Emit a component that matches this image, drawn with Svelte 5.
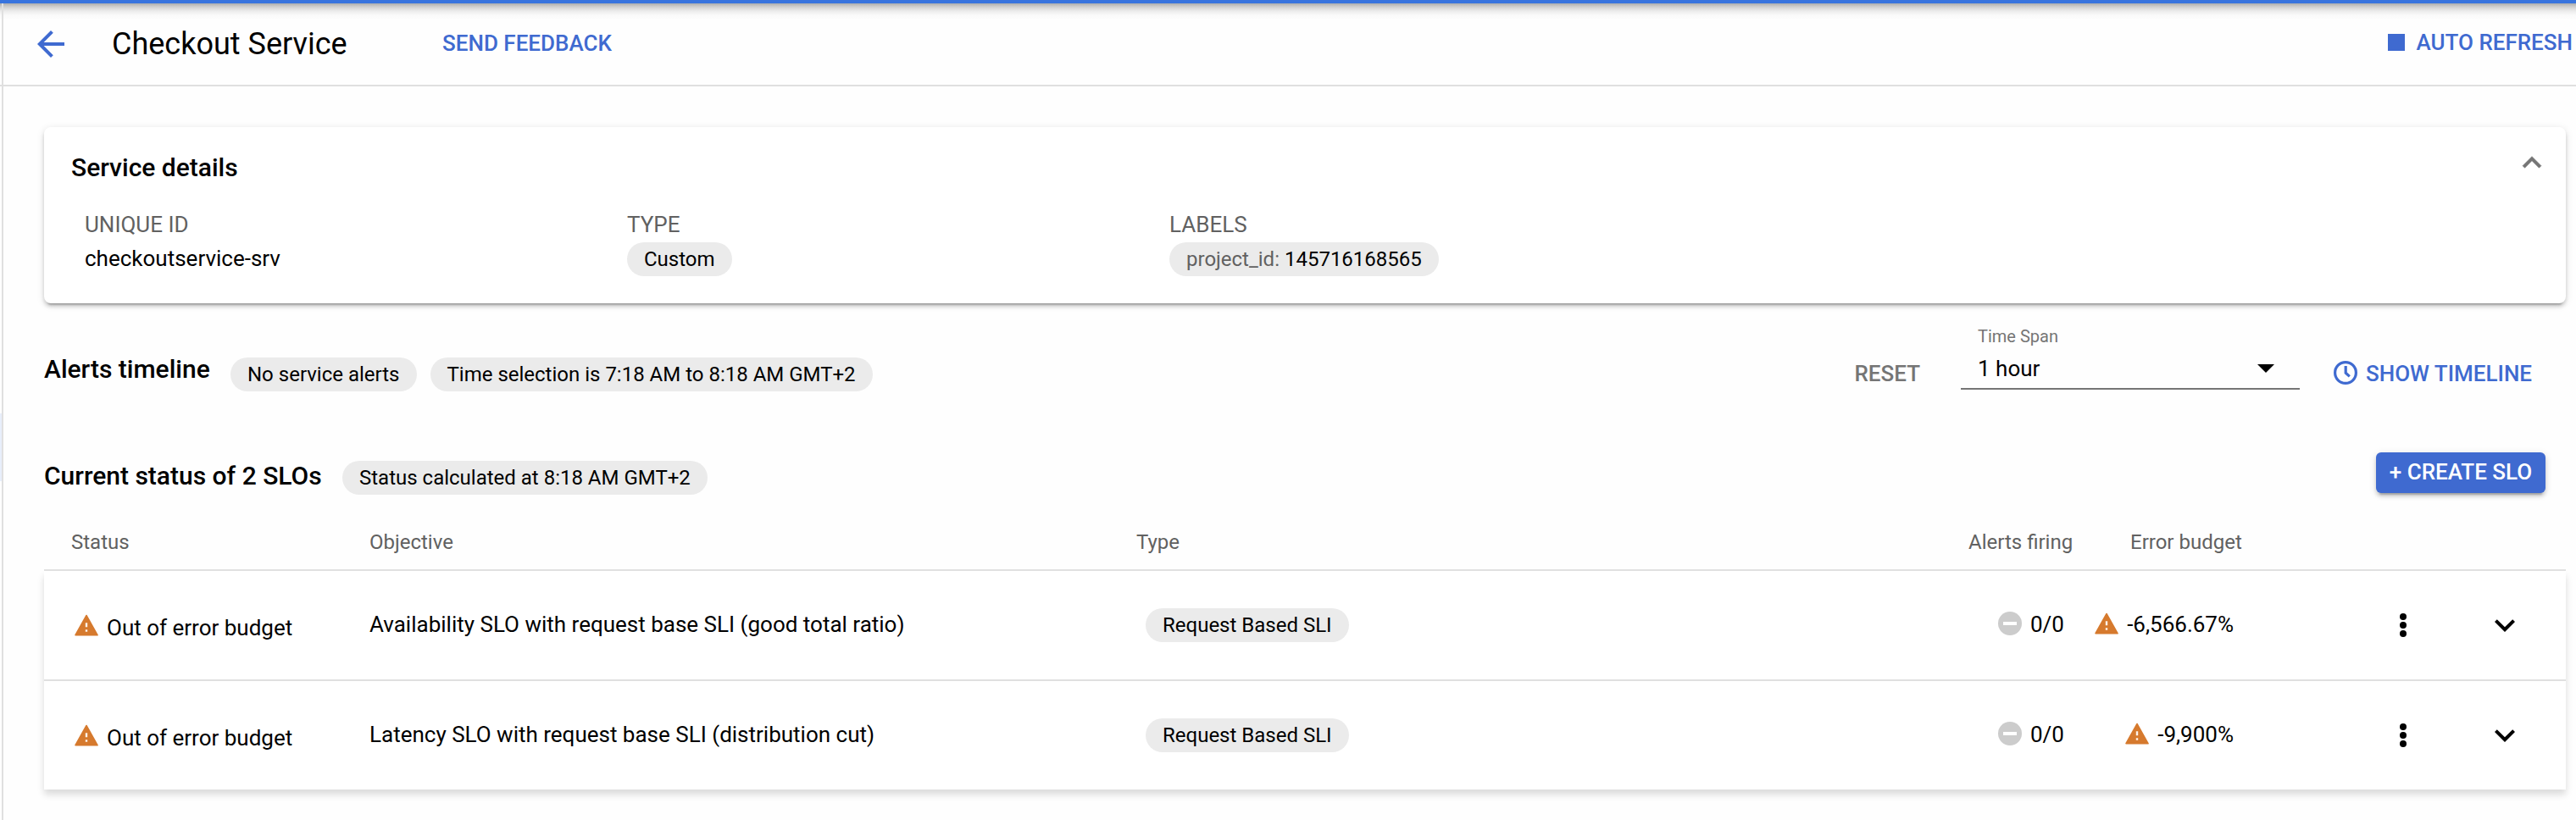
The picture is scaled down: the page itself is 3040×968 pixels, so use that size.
<script>
  const rows = [
    { name: 'Availability SLO with request base SLI (good total ratio)', type: 'Request Based SLI', alerts: '0/0', budget: '-6,566.67%' },
    { name: 'Latency SLO with request base SLI (distribution cut)', type: 'Request Based SLI', alerts: '0/0', budget: '-9,900%' }
  ];
</script>

{#snippet warning()}
  <svg class="warn" viewBox="0 0 28 26"><path class="tri" d="M14 1.6 26.9 24.6H1.1z" /><path class="mark" d="M12.8 10.2h2.4v5h-2.4zM12.8 18.2h2.4v2.6h-2.4z" /></svg>
{/snippet}

<div class="page">
  <aside class="rail"><div class="active"></div></aside>
  <div class="main">
    <header>
      <svg class="back" viewBox="0 0 24 24"><path d="M20 11H7.83l5.59-5.59L12 4l-8 8 8 8 1.41-1.41L7.83 13H20z" /></svg>
      <h1>Checkout Service</h1>
      <span class="action">SEND FEEDBACK</span>
      <span class="refresh"><i></i>AUTO REFRESH</span>
    </header>

    <section class="card">
      <div class="card-head">
        <h2>Service details</h2>
        <svg viewBox="0 0 24 24"><path d="M12 8l-6 6 1.41 1.41L12 10.83l4.59 4.58L18 14z" /></svg>
      </div>
      <dl>
        <div><dt>UNIQUE ID</dt><dd>checkoutservice-srv</dd></div>
        <div><dt>TYPE</dt><dd><span class="chip">Custom</span></dd></div>
        <div><dt>LABELS</dt><dd><span class="chip"><em>project_id:&nbsp;</em>145716168565</span></dd></div>
      </dl>
    </section>

    <section class="timeline">
      <h2>Alerts timeline</h2>
      <span class="chip">No service alerts</span>
      <span class="chip second">Time selection is 7:18 AM to 8:18 AM GMT+2</span>
      <span class="reset">RESET</span>
      <div class="select">
        <label for="span">Time Span</label>
        <div class="value" id="span">1 hour<svg viewBox="0 0 20 10"><path d="M0 0h20L10 10z" /></svg></div>
      </div>
      <span class="show">
        <svg viewBox="0 0 28 28"><circle cx="14" cy="14" r="12.4" /><path d="M14.2 6v8.2l4.6 4.2" /></svg>
        SHOW TIMELINE
      </span>
    </section>

    <section class="status">
      <h2>Current status of 2 SLOs</h2>
      <span class="chip">Status calculated at 8:18 AM GMT+2</span>
      <button>+ CREATE SLO</button>
    </section>

    <div class="table">
      <div class="row head">
        <span>Status</span><span>Objective</span><span>Type</span>
        <span>Alerts firing</span><span class="budget-head">Error budget</span>
      </div>
      <div class="body">
        {#each rows as row}
          <div class="row item">
            <span class="state">{@render warning()}<b>Out of error budget</b></span>
            <span class="name">{row.name}</span>
            <span class="type"><span class="chip">{row.type}</span></span>
            <span class="firing"><svg class="none" viewBox="0 0 28 28"><circle cx="14" cy="14" r="14" /><path d="M6 12h16v4H6z" /></svg>{row.alerts}</span>
            <span class="budget">{@render warning()}{row.budget}</span>
            <svg class="dots" viewBox="0 0 8 28"><circle cx="4" cy="4" r="4" /><circle cx="4" cy="14" r="4" /><circle cx="4" cy="24" r="4" /></svg>
            <svg class="expand" viewBox="0 0 24 24"><path d="M7.41 8.59L12 13.17l4.59-4.58L18 10l-6 6-6-6z" /></svg>
          </div>
        {/each}
      </div>
    </div>
  </div>
</div>

<style>
  :global(body) { margin: 0; background: #fefefe; }
  .page { box-sizing: border-box; width: 3040px; height: 968px; border-top: 4px solid #3874de; display: flex; overflow: hidden; font-family: Roboto, sans-serif; font-size: 26px; color: #000; background: linear-gradient(#adadad, #cfcfcf 4px, #ececec 9px, #fafafa 14px, #fefefe 20px) no-repeat 0 0 / 100% 20px; white-space: nowrap; }
  .rail { width: 2px; flex: none; border-right: 2px solid #e0e0e0; padding-top: 484px; }
  .active { height: 80px; background: #e8eefb; }
  .main { flex: 1; min-width: 0; }
  svg { display: block; flex: none; }
  h1, h2, dl, dd { margin: 0; }
  header { box-sizing: border-box; height: 98px; margin-left: -4px; border-bottom: 2px solid #e0e0e0; display: flex; align-items: center; padding: 0 4px 0 36px; color: #3f6ad0; fill: #3f6ad0; font-weight: 500; }
  .back { width: 48px; height: 48px; }
  h1 { font-size: 36px; font-weight: 400; color: #000; width: 390px; margin-left: 48px; }
  .action { margin-top: -2px; }
  .refresh { margin: -4px 0 0 auto; display: flex; align-items: center; gap: 13px; }
  .refresh i { width: 20px; height: 20px; background: #3f6ad0; }
  h2 { font-size: 30px; font-weight: 500; line-height: 40px; }
  .chip { display: inline-flex; align-items: center; height: 40px; border-radius: 20px; background: #ebebeb; padding: 0 20px; font-size: 24px; line-height: 40px; }
  .chip em { font-style: normal; color: #616161; }
  .card { box-sizing: border-box; margin: 48px 12px 0 48px; height: 208px; border-radius: 8px; background: #fff; padding: 28px 18px 0 32px; box-shadow: 0 6px 2px -4px rgba(0,0,0,.2), 0 4px 4px rgba(0,0,0,.14), 0 2px 10px rgba(0,0,0,.12); }
  .card-head { display: flex; justify-content: space-between; height: 40px; }
  .card-head svg { width: 44px; height: 44px; margin-top: -8px; fill: #757575; stroke: #757575; stroke-width: .3; }
  dl { display: grid; grid-template-columns: 640px 640px 1fr; padding: 27px 0 0 16px; }
  dt { color: #616161; line-height: 40px; }
  dd { display: flex; line-height: 40px; height: 40px; }
  dd .chip { margin-top: 1px; line-height: 38px; }
  .timeline { display: flex; height: 80px; margin: 22px 52px 0 48px; align-items: flex-start; }
  .timeline h2 { width: 220px; margin-top: 36px; }
  .timeline .chip { margin-top: 42px; }
  .timeline .second { margin-left: 16px; }
  .reset { margin: 41px 0 0 auto; line-height: 40px; font-weight: 500; color: #757575; }
  .select { box-sizing: border-box; width: 400px; height: 80px; margin-left: 48px; border-bottom: 2px solid #757575; padding: 2px 30px 0 20px; }
  label { display: block; font-size: 20px; line-height: 30px; color: #757575; }
  .value { display: flex; justify-content: space-between; align-items: center; line-height: 40px; margin-top: 3px; }
  .value svg { width: 20px; height: 10px; }
  .show { display: flex; align-items: center; gap: 10px; width: 234px; margin: 41px 0 0 40px; line-height: 40px; font-weight: 500; color: #3f6ad0; }
  .show svg { width: 28px; height: 28px; margin-top: -2px; fill: none; stroke: #3f6ad0; stroke-width: 3.2; }
  .status { display: flex; height: 48px; margin: 74px 36px 0 48px; }
  .status h2 { width: 352px; margin-top: 8px; }
  .status .chip { margin-top: 10px; }
  button { box-sizing: border-box; margin-left: auto; width: 200px; height: 48px; padding: 0 0 2px; border: 0; border-radius: 6px; background: #3f6ad0; color: #fff; font: 500 26px/46px Roboto, sans-serif; box-shadow: 0 6px 2px -4px rgba(0,0,0,.2), 0 4px 4px rgba(0,0,0,.14), 0 2px 10px rgba(0,0,0,.12); }
  .table { margin: 38px 12px 0 48px; }
  .row { display: grid; grid-template-columns: 352px 905px 982px 152px 199px 1fr; padding-left: 32px; }
  .head { height: 52px; border-bottom: 2px solid #e0e0e0; font-size: 24px; line-height: 40px; color: #616161; }
  .head .budget-head { margin-left: 39px; }
  .body { background: #fff; box-shadow: 0 6px 8px rgba(0,0,0,.14); clip-path: inset(0 -20px -30px -20px); }
  .item { height: 128px; grid-template-columns: 352px 916px 1006px 110px 168px 204px 1fr; align-items: center; }
  .item + .item { border-top: 2px solid #e0e0e0; }
  .name { margin-top: -2px; }
  .type { display: flex; }
  .type .chip { line-height: 38px; }
  .state, .firing, .budget { display: flex; align-items: center; gap: 10px; }
  .state { margin-top: 6px; padding-left: 4px; }
  .state .warn { margin-top: -6px; }
  b { font-weight: 400; }
  .warn { width: 28px; height: 26px; }
  .tri { fill: #d67a2e; stroke: #d67a2e; stroke-width: 1.8; stroke-linejoin: round; }
  .mark { fill: #fdf4ec; }
  .firing, .budget { margin-top: -2px; }
  .none { width: 28px; height: 28px; fill: #ccc; margin-top: -2px; }
  .none path { fill: #fff; }
  .budget { justify-content: flex-end; }
  .budget .warn { margin-top: -2px; }
  .dots { width: 8px; height: 28px; justify-self: end; }
  .expand { width: 48px; height: 48px; margin-left: 92px; }
</style>
